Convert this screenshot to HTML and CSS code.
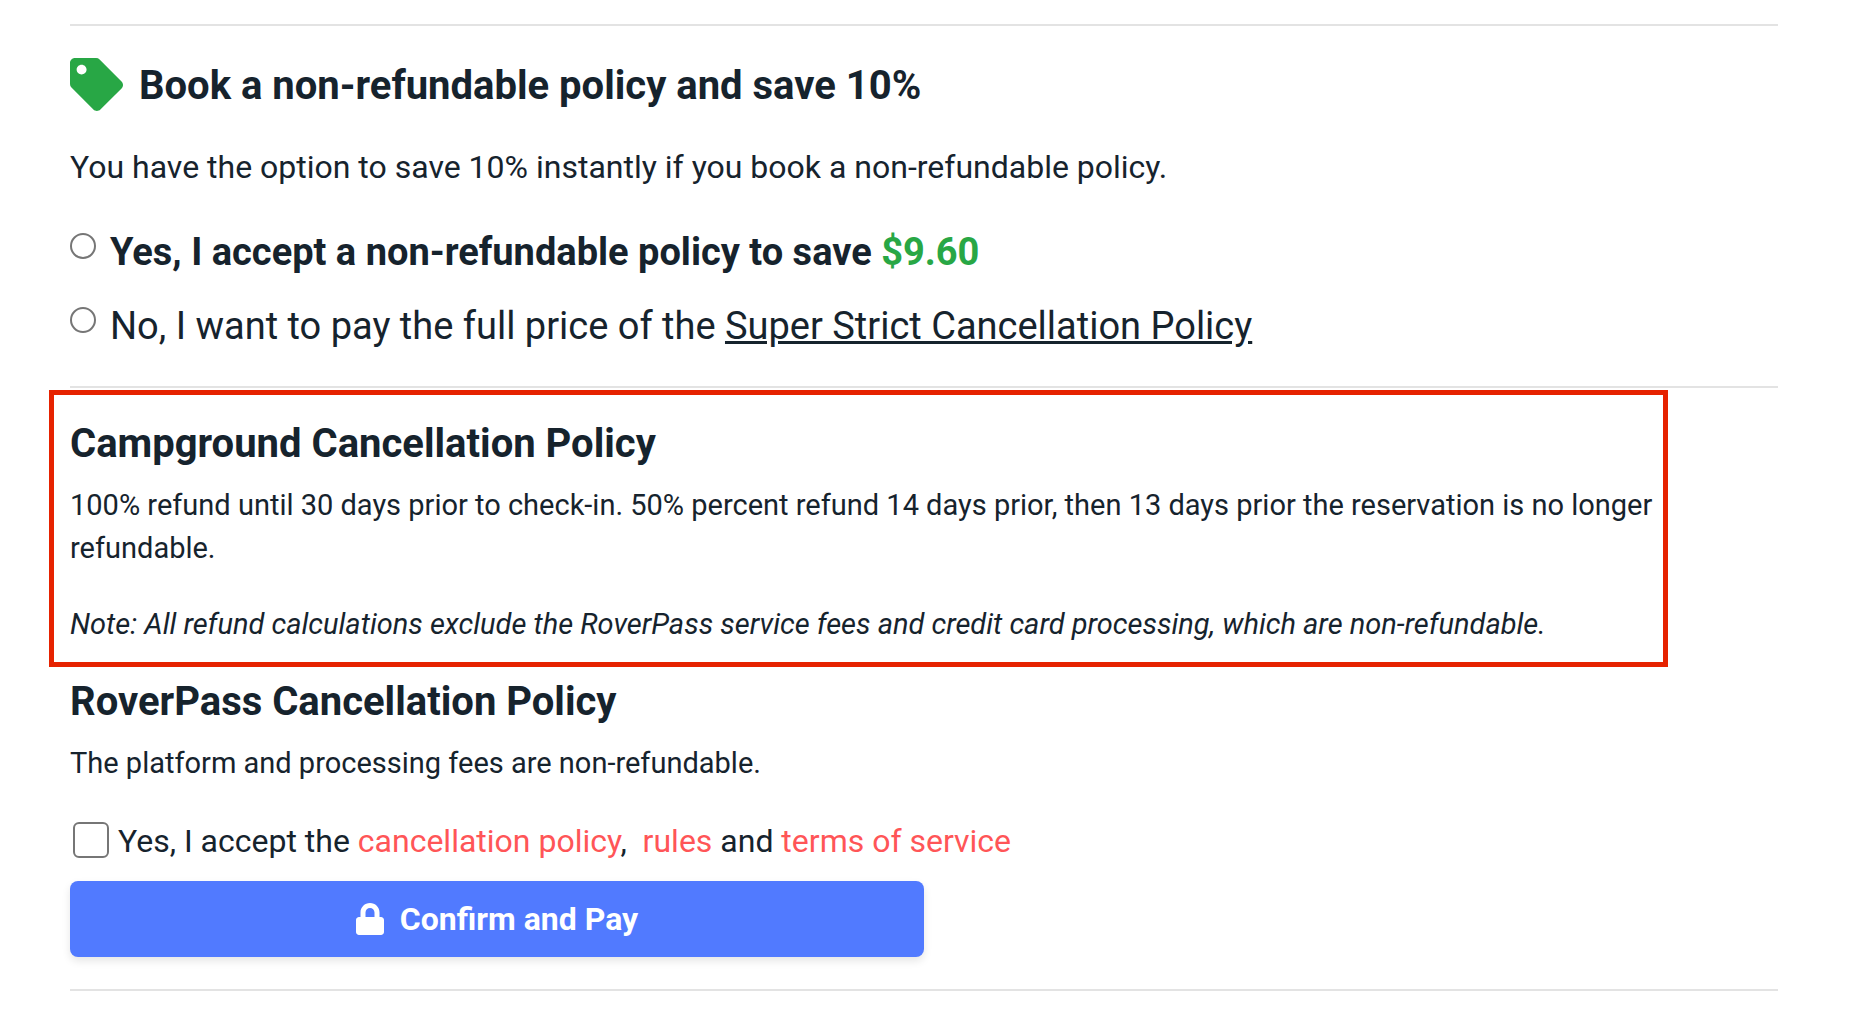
FILE: index.html
```html
<!DOCTYPE html>
<html lang="en">
<head>
<meta charset="utf-8">
<meta name="viewport" content="width=device-width, initial-scale=1">
<title>Confirm your booking</title>
<link rel="stylesheet" href="styles.css">
</head>
<body>
<main class="checkout">
  <section class="offer">
    <h2 class="title offer-title">
      <svg class="tag-icon" viewBox="0 0 512 512" aria-hidden="true"><path fill="currentColor" d="M0 252.118V48C0 21.49 21.49 0 48 0h204.118a48 48 0 0 1 33.941 14.059l211.882 211.882c18.745 18.745 18.745 49.137 0 67.882L293.823 497.941c-18.745 18.745-49.137 18.745-67.882 0L14.059 286.059A48 48 0 0 1 0 252.118zM112 64c-26.51 0-48 21.49-48 48s21.49 48 48 48 48-21.49 48-48-21.49-48-48-48z"/></svg>
      Book a non-refundable policy and save 10%
    </h2>
    <p class="lead">You have the option to save 10% instantly if you book a non-refundable policy.</p>
    <div class="options">
      <div class="option">
        <input class="radio" type="radio" name="policy" id="policy-save">
        <label class="option-strong" for="policy-save">Yes, I accept a non-refundable policy to save <span class="amount">$9.60</span></label>
      </div>
      <div class="option">
        <input class="radio" type="radio" name="policy" id="policy-full">
        <label for="policy-full">No, I want to pay the full price of the <a class="policy-link" href="#campground">Super Strict Cancellation Policy</a></label>
      </div>
    </div>
  </section>

  <section class="policy highlighted" id="campground">
    <h2 class="title">Campground Cancellation Policy</h2>
    <p class="policy-text">100% refund until 30 days prior to check-in. 50% percent refund 14 days prior, then 13 days prior the reservation is no longer refundable.</p>
    <p class="policy-text note">Note: All refund calculations exclude the RoverPass service fees and credit card processing, which are non-refundable.</p>
  </section>

  <section class="policy">
    <h2 class="title">RoverPass Cancellation Policy</h2>
    <p class="policy-text">The platform and processing fees are non-refundable.</p>
  </section>

  <form class="confirm">
    <div class="accept">
      <input class="checkbox" type="checkbox" id="accept">
      <label for="accept">Yes, I accept the <a href="#campground">cancellation policy</a>,&nbsp; <a href="#rules">rules</a> and <a href="#terms">terms of service</a></label>
    </div>
    <button class="pay" type="button">
      <svg class="lock-icon" viewBox="0 0 448 512" aria-hidden="true"><path fill="currentColor" d="M400 224h-24v-72C376 68.2 307.8 0 224 0S72 68.2 72 152v72H48c-26.5 0-48 21.5-48 48v192c0 26.5 21.5 48 48 48h352c26.5 0 48-21.5 48-48V272c0-26.5-21.5-48-48-48zm-104 0H152v-72c0-39.7 32.3-72 72-72s72 32.3 72 72v72z"/></svg>
      Confirm and Pay
    </button>
  </form>
</main>
</body>
</html>
```
FILE: styles.css
```css
* {
  box-sizing: border-box;
}

body {
  margin: 0;
  background: #fff;
  color: #16232d;
  font-family: Roboto, "Liberation Sans", sans-serif;
  font-size: 32px;
  line-height: 48px;
}

h2,
p {
  margin: 0;
}

.checkout {
  padding: 24px 96px 24px 70px;
}

.title {
  font-size: 40px;
  font-weight: 700;
  line-height: 48px;
}

/* Discount offer */
.offer {
  padding: 30px 0;
  border-top: 2px solid #e3e3e3;
  border-bottom: 2px solid #e3e3e3;
}

.offer-title {
  display: flex;
  align-items: flex-start;
  gap: 16px;
  line-height: 60px;
}

.tag-icon {
  flex: none;
  width: 53px;
  height: 53px;
  margin-top: 2px;
  color: #28a745;
}

.lead {
  margin-top: 27px;
}

.options {
  display: grid;
  gap: 14px;
  margin-top: 31px;
}

.option {
  display: flex;
  align-items: flex-start;
  gap: 14px;
  font-size: 38px;
  line-height: 60px;
}

.option-strong {
  font-weight: 700;
}

.amount {
  color: #28a745;
}

.policy-link {
  color: inherit;
}

.radio,
.checkbox {
  flex: none;
  margin: 0;
  appearance: none;
  background: #fff;
  border: 2px solid #767676;
}

.radio {
  width: 26px;
  height: 26px;
  margin-top: 11px;
  border-radius: 50%;
}

.radio:checked,
.checkbox:checked {
  background: #517aff;
}

/* Cancellation policies */
.policy {
  padding-top: 11px;
}

.policy-text {
  margin-top: 16px;
  font-size: 29px;
  line-height: 43px;
}

.highlighted {
  margin: 2px 110px 0 -21px;
  padding: 25px 5px 16px 16px;
  border: 5px solid #e62200;
}

.note {
  margin-top: 33px;
  font-style: italic;
}

/* Acceptance and payment */
.confirm {
  padding: 32px 0;
  border-bottom: 2px solid #e3e3e3;
}

.accept {
  display: flex;
  align-items: flex-start;
  gap: 9px;
  padding-left: 3px;
}

.accept a {
  color: #ff5557;
  text-decoration: none;
}

.checkbox {
  width: 36px;
  height: 36px;
  margin-top: 5px;
  border-radius: 6px;
}

.pay {
  display: flex;
  align-items: center;
  justify-content: center;
  gap: 16px;
  width: 50%;
  margin-top: 16px;
  padding: 14px 24px;
  border: 0;
  border-radius: 8px;
  background: #517aff;
  box-shadow: 0 4px 8px rgba(0, 0, 0, 0.1);
  color: #fff;
  font: inherit;
  font-weight: 700;
  cursor: pointer;
}

.lock-icon {
  flex: none;
  width: 28px;
  height: 32px;
}
```
